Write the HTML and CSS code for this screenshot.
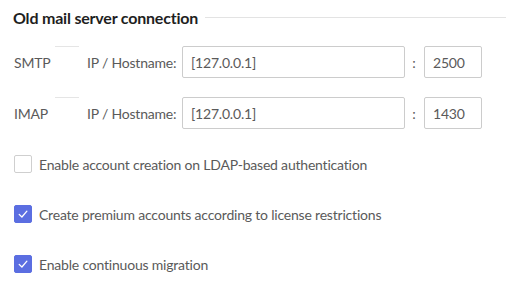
FILE: index.html
```html
<!DOCTYPE html>
<html lang="en">
<head>
<meta charset="utf-8">
<link rel="stylesheet" href="styles.css">
</head>
<body>
<section class="panel">
  <div class="legend">
    <span class="legend-title">Old mail server connection</span>
    <span class="legend-rule"></span>
  </div>

  <div class="server-row first">
    <div class="proto"><span class="proto-rule"></span><span class="proto-name">SMTP</span></div>
    <label class="host-label">IP / Hostname:</label>
    <input class="field host" type="text" value="[127.0.0.1]">
    <span class="colon">:</span>
    <input class="field port" type="text" value="2500">
  </div>

  <div class="server-row">
    <div class="proto"><span class="proto-rule"></span><span class="proto-name">IMAP</span></div>
    <label class="host-label">IP / Hostname:</label>
    <input class="field host" type="text" value="[127.0.0.1]">
    <span class="colon">:</span>
    <input class="field port" type="text" value="1430">
  </div>

  <div class="check-row first-check">
    <span class="box"></span>
    <span class="check-label">Enable account creation on LDAP-based authentication</span>
  </div>
  <div class="check-row">
    <span class="box checked"><svg viewBox="0 0 18 18" width="18" height="18"><path d="M5.2 9.4 L7.9 12 L12.9 6.2" fill="none" stroke="#fff" stroke-width="1.3" stroke-linecap="round" stroke-linejoin="round"/></svg></span>
    <span class="check-label">Create premium accounts according to license restrictions</span>
  </div>
  <div class="check-row">
    <span class="box checked"><svg viewBox="0 0 18 18" width="18" height="18"><path d="M5.2 9.4 L7.9 12 L12.9 6.2" fill="none" stroke="#fff" stroke-width="1.3" stroke-linecap="round" stroke-linejoin="round"/></svg></span>
    <span class="check-label">Enable continuous migration</span>
  </div>
</section>
</body>
</html>
```
FILE: styles.css
```css
* { box-sizing: border-box; }
html, body { margin: 0; padding: 0; background: #fff; }
body {
  font-family: Lato, "Noto Sans", "Liberation Sans", sans-serif;
  font-size: 14px;
  letter-spacing: -0.2px;
  color: #5a5a5a;
}
.panel { padding: 7px 0 0 14px; }

.legend { display: flex; align-items: center; height: 20px; }
.legend-title { font-size: 16px; font-weight: 700; color: #1f1f1f; margin-left: -1px; letter-spacing: -0.2px; }
.legend-rule { flex: 1; height: 1px; background: #e3e3e3; margin-left: 7px; }

.server-row {
  display: grid;
  grid-template-columns: 73px 95px 223px 19px 58px;
  height: 32px;
  margin-top: 19px;
  align-items: center;
}
.proto { height: 100%; display: flex; flex-direction: column; }
.proto-rule { display: block; width: 24px; height: 1px; background: #e5e5e5; margin-left: 41px; }
.proto-name { flex: 1; display: flex; align-items: center; }
.host-label { white-space: nowrap; }
.field {
  height: 32px;
  border: 1px solid #cccccc;
  border-radius: 2px;
  padding: 0 0 0 8px;
  font: inherit;
  letter-spacing: -0.2px;
  color: #5a5a5a;
  background: #fff;
  width: 100%;
  outline: none;
}
.colon { text-align: center; padding-right: 1px; }

.check-row { display: flex; align-items: center; height: 18px; margin-top: 32px; }
.check-row.first-check { margin-top: 26px; }
.box {
  width: 18px; height: 18px;
  border: 1px solid #cfcfcf;
  border-radius: 2px;
  background: #fff;
  margin-right: 7px;
  display: flex;
}
.box.checked { background: #5b6ee1; border-color: #5b6ee1; }
.box svg { margin: -1px; }
.check-label { white-space: nowrap; }
```
